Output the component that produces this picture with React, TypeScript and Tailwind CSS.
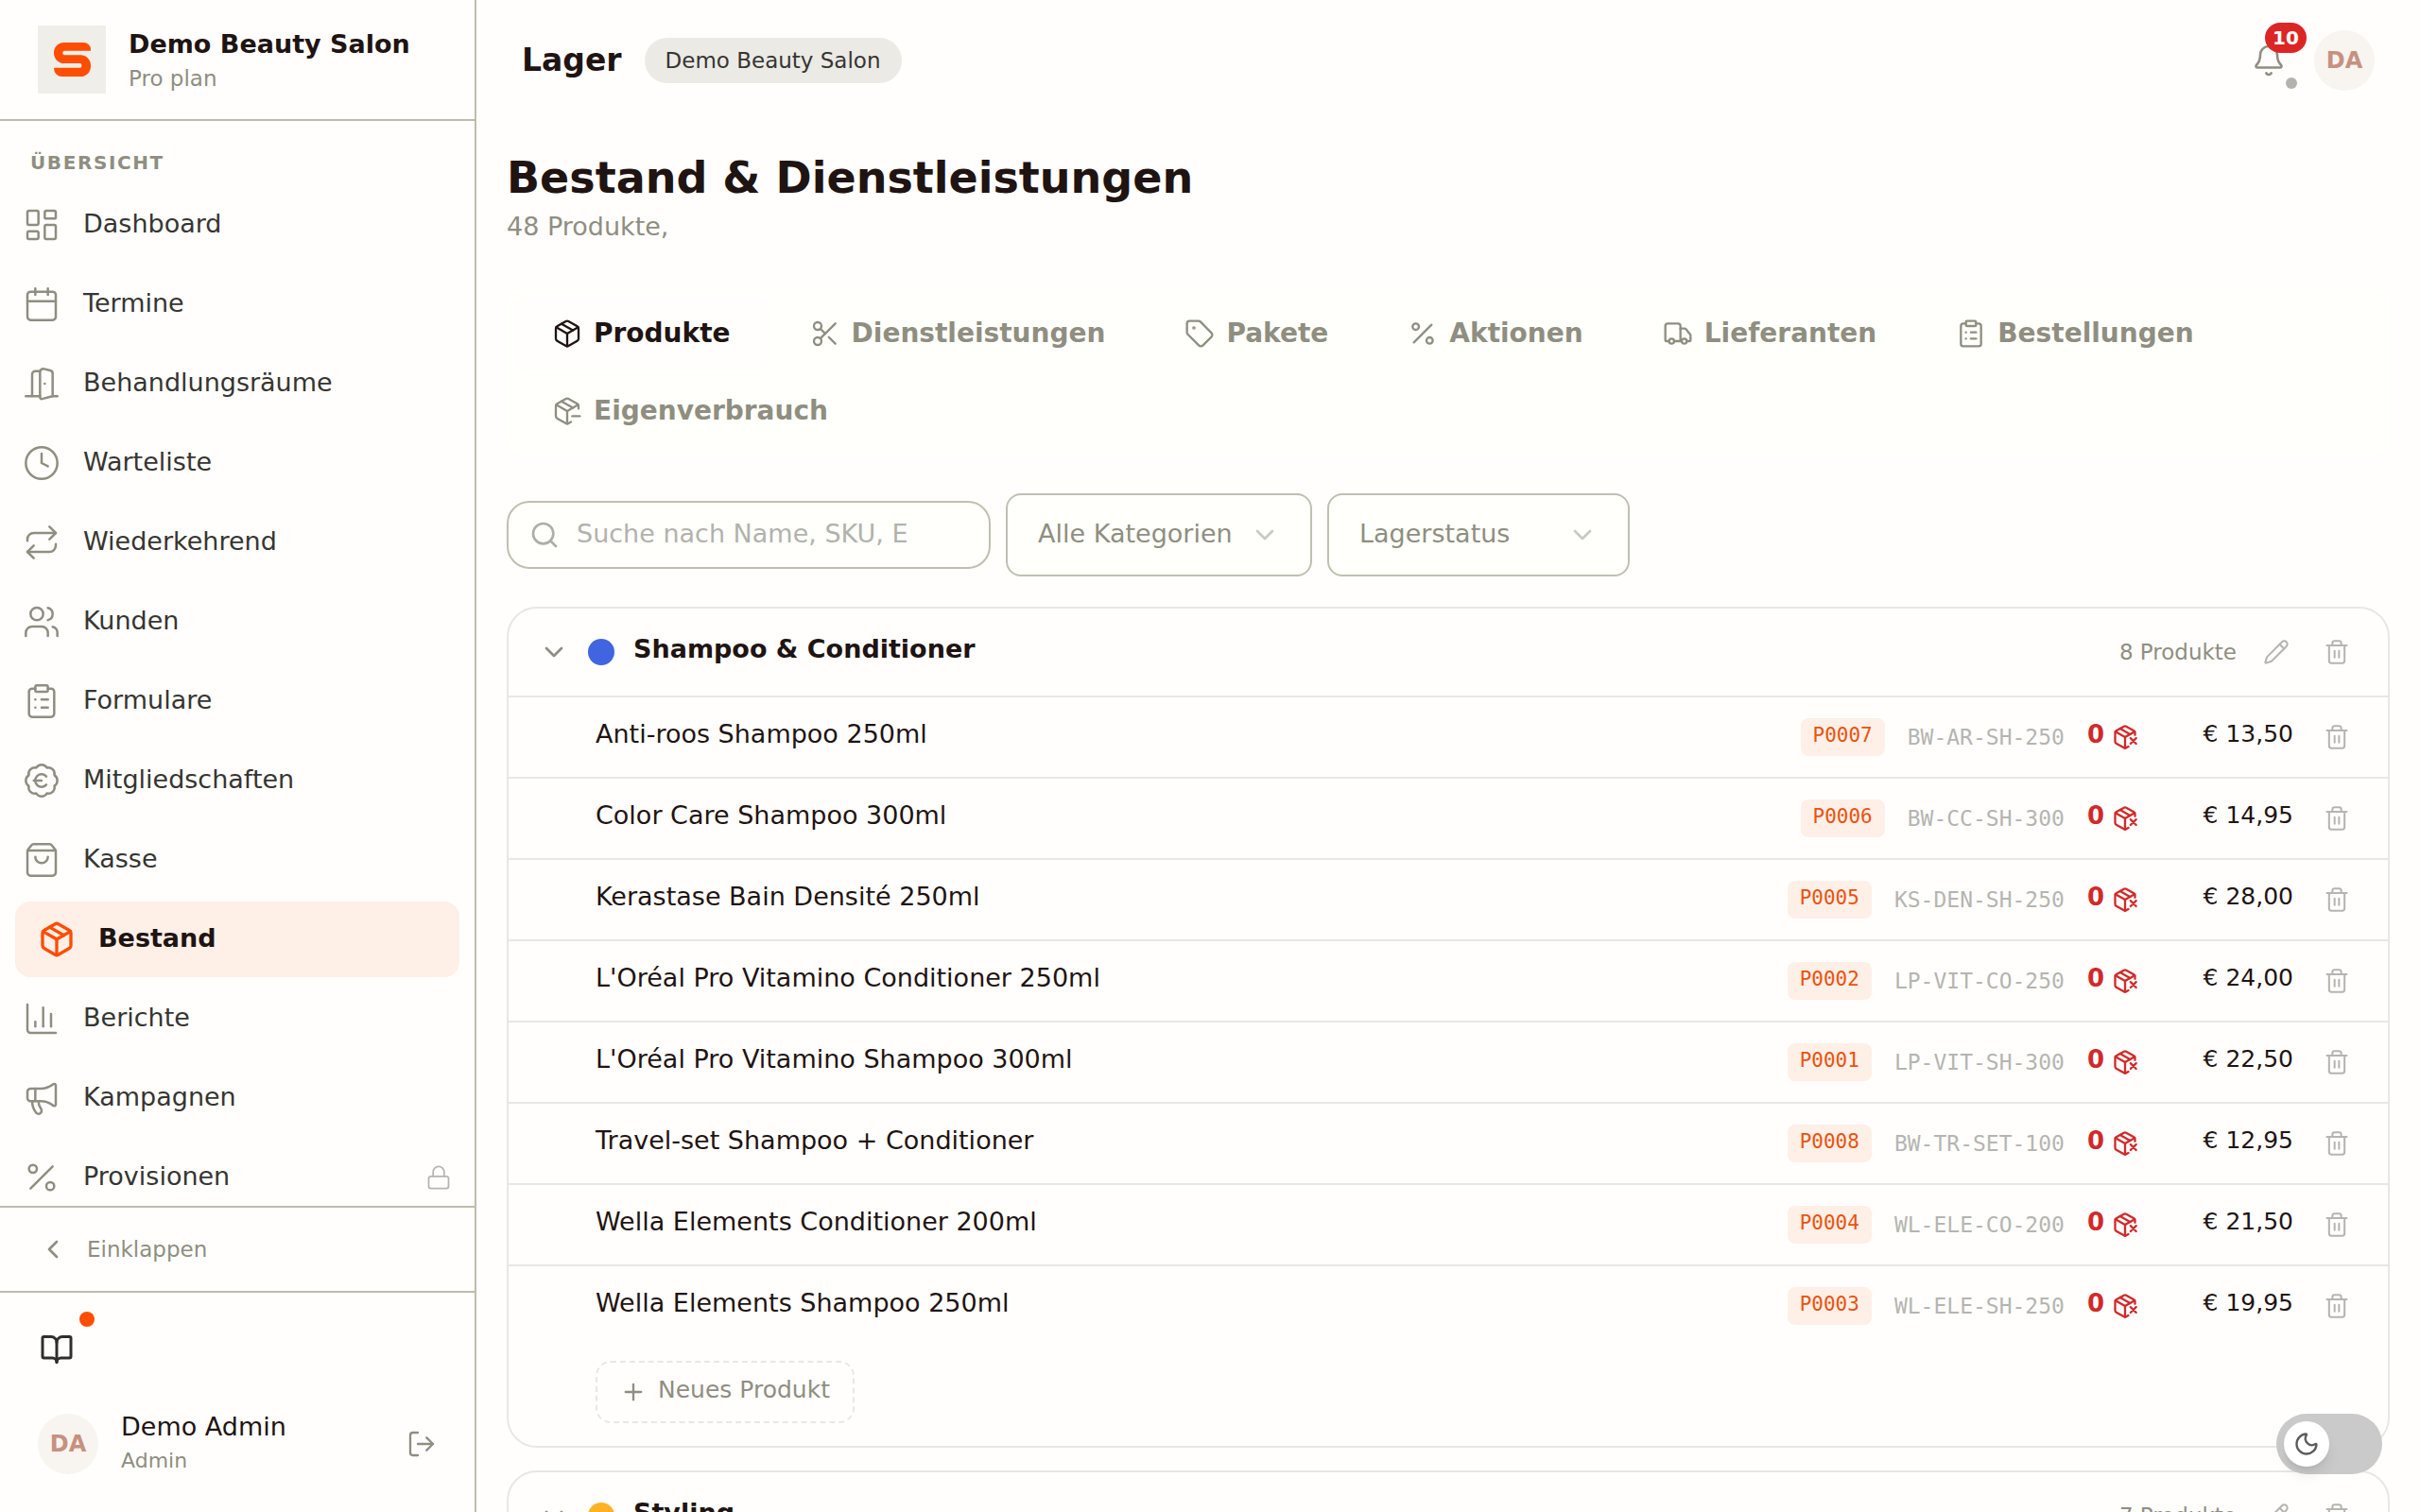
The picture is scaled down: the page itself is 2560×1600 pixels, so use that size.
import { useState } from "react";
import {
  BadgeEuro,
  Bell,
  BookOpen,
  Calendar,
  ChartColumn,
  ChevronDown,
  ChevronLeft,
  ClipboardList,
  Clock,
  DoorOpen,
  LayoutDashboard,
  Lock,
  LogOut,
  Megaphone,
  Moon,
  Package,
  PackageMinus,
  PackageX,
  Pencil,
  Percent,
  Plus,
  Repeat,
  Scissors,
  Search,
  ShoppingBag,
  Tag,
  Trash2,
  Truck,
  Users,
  type LucideIcon,
} from "lucide-react";

interface NavItem {
  label: string;
  icon: LucideIcon;
  active?: boolean;
  locked?: boolean;
}

interface Product {
  name: string;
  code: string;
  sku: string;
  stock: number;
  price: string;
}

interface Category {
  name: string;
  dot: string;
  count: number;
  products: Product[];
}

const NAV_ITEMS: NavItem[] = [
  { label: "Dashboard", icon: LayoutDashboard },
  { label: "Termine", icon: Calendar },
  { label: "Behandlungsräume", icon: DoorOpen },
  { label: "Warteliste", icon: Clock },
  { label: "Wiederkehrend", icon: Repeat },
  { label: "Kunden", icon: Users },
  { label: "Formulare", icon: ClipboardList },
  { label: "Mitgliedschaften", icon: BadgeEuro },
  { label: "Kasse", icon: ShoppingBag },
  { label: "Bestand", icon: Package, active: true },
  { label: "Berichte", icon: ChartColumn },
  { label: "Kampagnen", icon: Megaphone },
  { label: "Provisionen", icon: Percent, locked: true },
];

const TABS: { label: string; icon: LucideIcon }[] = [
  { label: "Produkte", icon: Package },
  { label: "Dienstleistungen", icon: Scissors },
  { label: "Pakete", icon: Tag },
  { label: "Aktionen", icon: Percent },
  { label: "Lieferanten", icon: Truck },
  { label: "Bestellungen", icon: ClipboardList },
  { label: "Eigenverbrauch", icon: PackageMinus },
];

const CATEGORIES: Category[] = [
  {
    name: "Shampoo & Conditioner",
    dot: "bg-[#4164e1]",
    count: 8,
    products: [
      { name: "Anti-roos Shampoo 250ml", code: "P0007", sku: "BW-AR-SH-250", stock: 0, price: "€ 13,50" },
      { name: "Color Care Shampoo 300ml", code: "P0006", sku: "BW-CC-SH-300", stock: 0, price: "€ 14,95" },
      { name: "Kerastase Bain Densité 250ml", code: "P0005", sku: "KS-DEN-SH-250", stock: 0, price: "€ 28,00" },
      { name: "L'Oréal Pro Vitamino Conditioner 250ml", code: "P0002", sku: "LP-VIT-CO-250", stock: 0, price: "€ 24,00" },
      { name: "L'Oréal Pro Vitamino Shampoo 300ml", code: "P0001", sku: "LP-VIT-SH-300", stock: 0, price: "€ 22,50" },
      { name: "Travel-set Shampoo + Conditioner", code: "P0008", sku: "BW-TR-SET-100", stock: 0, price: "€ 12,95" },
      { name: "Wella Elements Conditioner 200ml", code: "P0004", sku: "WL-ELE-CO-200", stock: 0, price: "€ 21,50" },
      { name: "Wella Elements Shampoo 250ml", code: "P0003", sku: "WL-ELE-SH-250", stock: 0, price: "€ 19,95" },
    ],
  },
  { name: "Styling", dot: "bg-[#ffb224]", count: 7, products: [] },
];

const Logo = () => (
  <div className="flex size-[72px] shrink-0 items-center justify-center bg-[#efeee8]">
    <svg viewBox="0 0 117 108" className="h-9 w-[39px]" aria-hidden="true">
      <path
        fill="#ff4d00"
        d="M95 0A22 22 0 0 1 117 22V26H34A6 6 0 0 0 28 32V34A6 6 0 0 0 34 40H85A32 32 0 0 1 117 72V76A32 32 0 0 1 85 108H26A26 26 0 0 1 0 82V80H83A5 5 0 0 0 88 75V71A5 5 0 0 0 83 66H32A32 32 0 0 1 0 34V32A32 32 0 0 1 32 0Z"
      />
    </svg>
  </div>
);

const Avatar = () => (
  <div className="flex size-16 shrink-0 items-center justify-center rounded-full bg-[#f8f4f0] text-2xl font-bold text-[#c6917f]">
    DA
  </div>
);

const NavLink = ({ item }: { item: NavItem }) => {
  const Icon = item.icon;
  return (
    <a
      href="#"
      className={`flex h-20 shrink-0 items-center gap-6 px-6 ${
        item.active
          ? "mx-4 rounded-2xl bg-[#feefe7] font-bold text-[#1f1412]"
          : "text-[#363531]"
      }`}
    >
      <Icon
        size={40}
        strokeWidth={item.active ? 2 : 1.5}
        className={`shrink-0 ${item.active ? "text-[#ff4d00]" : "text-[#8f8e80]"}`}
      />
      <span className="flex-1 pb-0.5">{item.label}</span>
      {item.locked && <Lock size={28} strokeWidth={1.5} className="text-[#b5b5b0]" />}
    </a>
  );
};

const Sidebar = () => (
  <aside className="flex w-[504px] shrink-0 flex-col border-r-2 border-[#bdbdac]">
    <div className="flex h-32 shrink-0 items-center gap-6 border-b-2 border-[#bdbdac] px-10">
      <Logo />
      <div className="pt-1">
        <p className="leading-9 font-bold text-[#1f1412]">Demo Beauty Salon</p>
        <p className="text-[23px] leading-9 text-[#8f8e80]">Pro plan</p>
      </div>
    </div>

    <nav className="flex min-h-0 flex-1 flex-col gap-1 overflow-hidden pt-7">
      <h2 className="mb-1.5 px-8 text-xl leading-8 font-bold tracking-[0.08em] text-[#8f8e80]">
        ÜBERSICHT
      </h2>
      {NAV_ITEMS.map((item) => (
        <NavLink key={item.label} item={item} />
      ))}
    </nav>

    <button className="flex h-[92px] shrink-0 items-center gap-5 border-y-2 border-[#bdbdac] px-10 text-[23px] text-[#8f8e80]">
      <ChevronLeft size={32} />
      Einklappen
    </button>

    <div className="flex shrink-0 flex-col gap-8 pt-6 pb-10">
      <button
        aria-label="Handbuch"
        className="relative ml-6 flex size-[72px] items-center justify-center text-[#2f2e2b]"
      >
        <BookOpen size={36} />
        <span className="absolute -top-1 -right-1 size-4 rounded-full bg-[#ff4d00]" />
      </button>
      <div className="flex items-center gap-6 px-10">
        <Avatar />
        <div className="flex flex-1 flex-col gap-2 leading-7">
          <p className="text-[#1f1412]">Demo Admin</p>
          <p className="text-[22px] text-[#8f8e80]">Admin</p>
        </div>
        <button aria-label="Abmelden" className="text-[#8f8e80]">
          <LogOut size={32} strokeWidth={1.75} />
        </button>
      </div>
    </div>
  </aside>
);

const Header = () => (
  <header className="flex h-32 shrink-0 items-center gap-6 px-12">
    <h1 className="text-[33px] leading-10 font-bold text-[#1f1412]">Lager</h1>
    <span className="flex h-12 items-center rounded-full bg-[#ebeae5] px-[22px] text-[23px] text-[#363531]">
      Demo Beauty Salon
    </span>
    <div className="ml-auto flex items-center gap-[30px]">
      <button aria-label="Benachrichtigungen" className="relative text-[#8f8e80]">
        <Bell size={36} strokeWidth={1.75} />
        <span className="absolute -top-[22px] left-3.5 flex h-8 w-11 items-center justify-center rounded-full bg-[#dc2626] text-xl font-bold text-white">
          10
        </span>
        <span className="absolute top-9 left-9 size-3 rounded-full bg-[#b3b3ae]" />
      </button>
      <Avatar />
    </div>
  </header>
);

const TabBar = () => {
  const [current, setCurrent] = useState("Produkte");
  return (
    <div role="tablist" className="mt-[46px] flex flex-wrap gap-1 rounded-2xl bg-[#fffffb] p-2">
      {TABS.map(({ label, icon: Icon }) => (
        <button
          key={label}
          role="tab"
          aria-selected={label === current}
          onClick={() => setCurrent(label)}
          className={`flex h-[78px] items-center gap-3 rounded-xl px-10 text-[28px] font-bold ${
            label === current ? "bg-[#fffefd] text-[#1f1412]" : "text-[#8f8e80]"
          }`}
        >
          <Icon size={32} strokeWidth={1.75} />
          {label}
        </button>
      ))}
    </div>
  );
};

const FilterSelect = ({ label, width }: { label: string; width: string }) => (
  <div
    className={`grid h-[88px] items-center rounded-2xl border-2 border-[#c0c0b0] bg-[#fffffb] ${width}`}
  >
    <select
      aria-label={label}
      className="col-start-1 row-start-1 h-full w-full appearance-none bg-transparent px-8 pb-0.5 text-[#8f8e80] outline-none"
    >
      <option>{label}</option>
    </select>
    <ChevronDown
      size={32}
      className="pointer-events-none col-start-1 row-start-1 mr-8 justify-self-end text-[#c9c9c6]"
    />
  </div>
);

const Filters = () => (
  <div className="mt-10 flex items-center gap-4">
    <label className="flex h-[72px] w-[512px] items-center gap-[18px] rounded-3xl border-2 border-[#c0c0b0] bg-[#fffffb] px-[22px]">
      <Search size={32} className="shrink-0 text-[#aeaea8]" />
      <input
        type="search"
        aria-label="Suche"
        placeholder="Suche nach Name, SKU, E"
        className="min-w-0 flex-1 bg-transparent pb-0.5 outline-none placeholder:text-[#b2b2ad]"
      />
    </label>
    <FilterSelect label="Alle Kategorien" width="w-[324px]" />
    <FilterSelect label="Lagerstatus" width="w-[320px]" />
  </div>
);

const IconButton = ({ label, icon: Icon }: { label: string; icon: LucideIcon }) => (
  <button aria-label={label} className="p-2 text-[#b5b5b0]">
    <Icon size={28} strokeWidth={1.75} />
  </button>
);

const ProductRow = ({ product }: { product: Product }) => (
  <li className="flex h-[86px] items-center gap-6 border-b-2 border-[#e8e7e5] pr-8 pl-[92px] last:h-[84px] last:border-b-0">
    <span className="flex-1 pb-1.5 text-[#1f1412]">{product.name}</span>
    <span className="flex h-10 items-center rounded-lg bg-[#feefe7] px-[13px] pb-0.5 font-['DejaVu_Sans_Mono',monospace] text-[21px] text-[#ea530e]">
      {product.code}
    </span>
    <span className="font-['DejaVu_Sans_Mono',monospace] text-[23px] text-[#b5b5b0]">{product.sku}</span>
    <span className="flex items-center gap-2 text-[26px] text-[#d02a2a]">
      <span className="pb-1.5 font-bold">{product.stock}</span>
      <PackageX size={28} />
    </span>
    <span className="w-[140px] pb-1.5 text-right text-[25px] text-[#1f1412]">{product.price}</span>
    <IconButton label={`${product.name} löschen`} icon={Trash2} />
  </li>
);

const CategoryCard = ({ category }: { category: Category }) => (
  <section className="rounded-[32px] border-2 border-[#e8e7e5]">
    <div className="flex h-[94px] items-center gap-5 border-b-2 border-[#e8e7e5] px-8">
      <button aria-label="Kategorie einklappen" className="text-[#8f8e80]">
        <ChevronDown size={32} />
      </button>
      <span className={`size-7 rounded-full ${category.dot}`} />
      <h3 className="flex-1 pb-1.5 font-bold text-[#1f1412]">{category.name}</h3>
      <span className="text-[23px] text-[#8f8e80]">{category.count} Produkte</span>
      <IconButton label="Kategorie bearbeiten" icon={Pencil} />
      <IconButton label="Kategorie löschen" icon={Trash2} />
    </div>
    <ul>
      {category.products.map((product) => (
        <ProductRow key={product.code} product={product} />
      ))}
    </ul>
    <div className="pt-4 pb-6 pl-[92px]">
      <button className="flex h-[66px] items-center gap-3 rounded-2xl border-2 border-dashed border-[#e8e7e5] px-6 text-[25px] text-[#8f8e80]">
        <Plus size={28} />
        <span className="pb-1">Neues Produkt</span>
      </button>
    </div>
  </section>
);

const ThemeSwitch = () => {
  const [dark, setDark] = useState(false);
  return (
    <button
      role="switch"
      aria-checked={dark}
      aria-label="Dunkles Design"
      onClick={() => setDark(!dark)}
      className={`fixed right-10 bottom-10 flex h-16 w-28 items-center rounded-full bg-[#cacaca] px-2 ${
        dark ? "justify-end" : ""
      }`}
    >
      <span className="flex size-12 items-center justify-center rounded-full bg-white text-[#5c5c5c] shadow-lg">
        <Moon size={28} />
      </span>
    </button>
  );
};

export default function App() {
  return (
    <div className="flex h-screen overflow-hidden bg-[#fffefd] font-['DejaVu_Sans',sans-serif] text-[27px] leading-normal">
      <Sidebar />
      <div className="flex min-w-0 flex-1 flex-col">
        <Header />
        <main className="min-h-0 flex-1 overflow-hidden px-8 pt-8">
          <h2 className="text-[46px] leading-[56px] font-bold text-[#1f1412]">
            Bestand &amp; Dienstleistungen
          </h2>
          <p className="mt-1 leading-10 text-[#8f8e80]">48 Produkte,</p>
          <TabBar />
          <Filters />
          <div className="mt-8 flex flex-col gap-6">
            {CATEGORIES.map((category) => (
              <CategoryCard key={category.name} category={category} />
            ))}
          </div>
        </main>
      </div>
      <ThemeSwitch />
    </div>
  );
}
